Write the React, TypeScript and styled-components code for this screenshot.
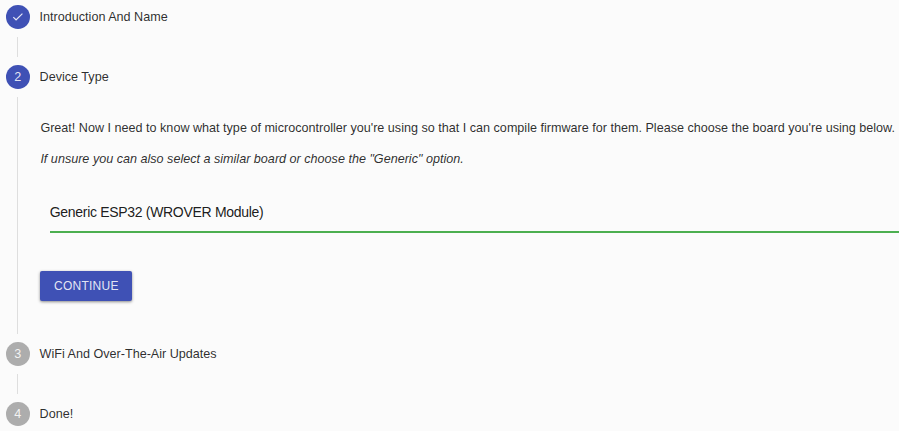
import React from "react";
import styled, { createGlobalStyle } from "styled-components";

const GlobalStyle = createGlobalStyle`
  body { margin: 0; background: #fbfbfb; overflow: hidden; }
  * { box-sizing: border-box; }
`;

const Stepper = styled.main`
  width: 899px;
  height: 431px;
  overflow: hidden;
  padding: 4.7px 0 0 5.8px;
  font-family: "Liberation Sans", Arial, sans-serif;
  font-size: 12.6px;
  color: rgba(0, 0, 0, 0.84);
`;

const StepHeader = styled.div`
  display: flex;
  align-items: center;
  height: 24px;
  gap: 10px;
  line-height: 24px;
`;

const Marker = styled.span<{ $active?: boolean }>`
  display: flex;
  align-items: center;
  justify-content: center;
  width: 23.8px;
  height: 23.8px;
  border-radius: 50%;
  background: ${(p) => (p.$active ? "#3f51b5" : "#adadad")};
  color: rgba(255, 255, 255, 0.87);
`;

const StepBody = styled.div<{ $height: number }>`
  height: ${(p) => p.$height}px;
  margin: 8px 0 8px 11.2px;
  padding-left: 22.4px;
  border-left: 1px solid #dedede;
`;

const Paragraph = styled.p`
  margin: 0 0 11px;
  line-height: 20px;
  white-space: nowrap;
`;

const Content = styled.div`
  padding-top: 21.5px;
`;

const Select = styled.div`
  margin: 32px 0 0 9.4px;
  height: 32px;
  padding-top: 1px;
  border-bottom: 2px solid #4caf50;
  color: rgba(0, 0, 0, 0.9);
  font-size: 14px;
  letter-spacing: -0.31px;
  line-height: 20px;
`;

const Button = styled.button`
  display: block;
  width: 92px;
  height: 30px;
  margin-top: 38px;
  padding: 0;
  border: 0;
  border-radius: 2px;
  background: #3f51b5;
  color: rgba(255, 255, 255, 0.87);
  font: 12px "Liberation Sans", Arial, sans-serif;
  letter-spacing: 0.25px;
  box-shadow: 0 1px 3px rgba(0, 0, 0, 0.45);
`;

function Step({ marker, title, active }: { marker: React.ReactNode; title: string; active?: boolean }) {
  return (
    <StepHeader>
      <Marker $active={active}>{marker}</Marker>
      <span>{title}</span>
    </StepHeader>
  );
}

export default function App() {
  return (
    <Stepper>
      <GlobalStyle />
      <Step
        active
        title="Introduction And Name"
        marker={
          <svg width="13.5" height="13.5" viewBox="0 0 24 24" fill="currentColor">
            <path d="M9 16.17 4.83 12l-1.42 1.41L9 19 21 7l-1.41-1.41z" />
          </svg>
        }
      />
      <StepBody $height={20} />
      <Step active title="Device Type" marker="2" />
      <StepBody $height={237}>
        <Content>
          <Paragraph>
            Great! Now I need to know what type of microcontroller you're using so that I can compile firmware for them. Please choose the board you're using below.
          </Paragraph>
          <Paragraph>
            <em>If unsure you can also select a similar board or choose the "Generic" option.</em>
          </Paragraph>
          <Select>Generic ESP32 (WROVER Module)</Select>
          <Button>CONTINUE</Button>
        </Content>
      </StepBody>
      <Step title="WiFi And Over-The-Air Updates" marker="3" />
      <StepBody $height={20} />
      <Step title="Done!" marker="4" />
    </Stepper>
  );
}
